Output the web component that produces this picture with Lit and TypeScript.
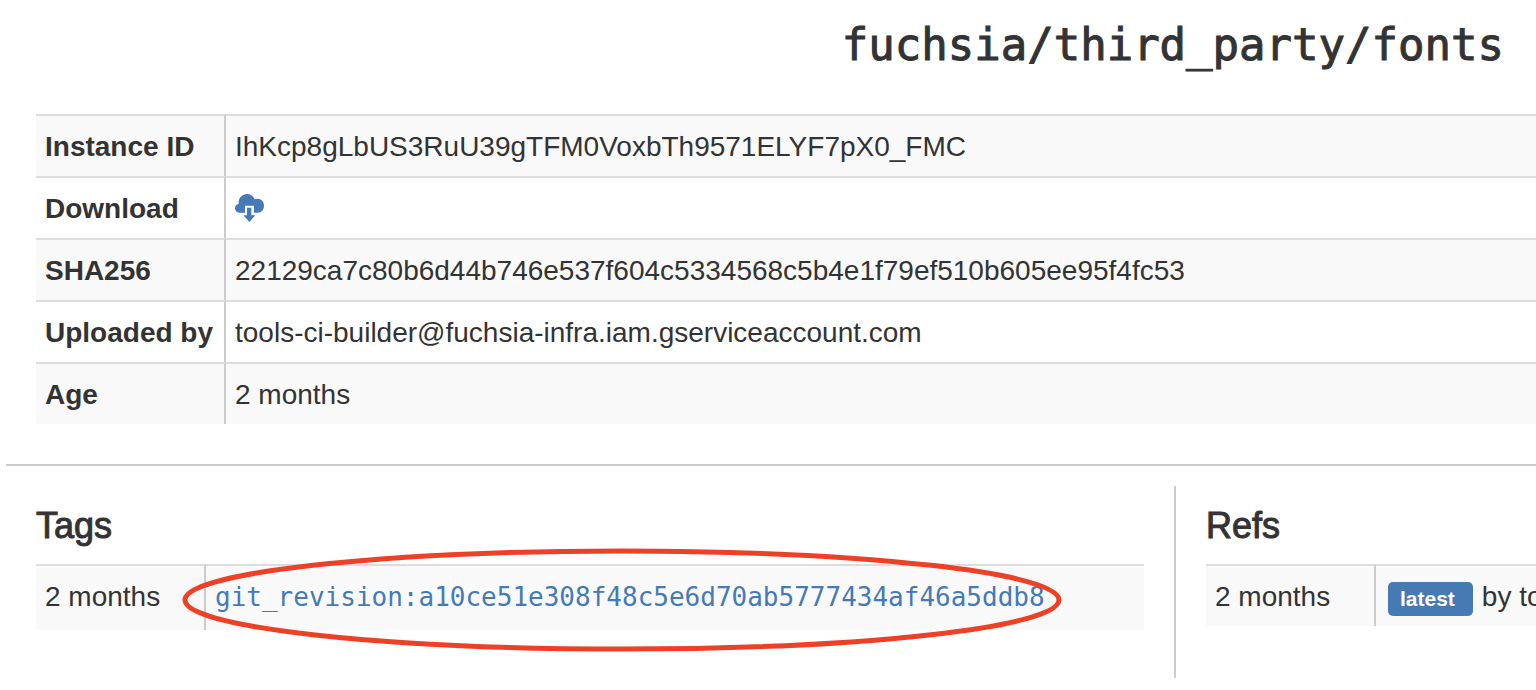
import { LitElement, html, css, svg } from "lit";
import { customElement } from "lit/decorators.js";

const cloudDownload = svg`
  <path d="M13 56C5 56 0 50 0 43C0 36 4 31 11 29C10 12 22 0 36 0C47 0 55 6 59 16C62 15 65 14 68 14C79 14 87 23 87 35C87 47 79 56 68 56H57V35H30V56Z"/>
  <path d="M36 41H49V64H61L43 84L25 64H36Z"/>`;

const account = "tools-ci-builder@fuchsia-infra.iam.gserviceaccount.com";

@customElement("app-root")
export class AppRoot extends LitElement {
  static styles = css`
    :host {
      display: block;
      overflow: hidden;
      padding-left: 6px;
      background: #fff;
      color: #333;
      font-family: "Liberation Sans", Arial, sans-serif;
      font-size: 28px;
      line-height: 40px;
    }
    * {
      box-sizing: border-box;
    }
    h1 {
      margin: 0;
      padding: 21px 32px 45px;
      font-family: "DejaVu Sans Mono", monospace;
      font-size: 44px;
      line-height: 48px;
      font-weight: 400;
      text-align: right;
      -webkit-text-stroke: 1px #333;
    }
    h2 {
      margin: 0;
      padding: 19px 0 17px;
      font-size: 36px;
      line-height: 42px;
      font-weight: 400;
      -webkit-text-stroke: 1px #333;
    }
    table {
      width: 100%;
      border-spacing: 0;
      table-layout: fixed;
    }
    th,
    td {
      height: 62px;
      padding: 11px 9px 9px;
      border-top: 2px solid #ddd;
      text-align: left;
      white-space: nowrap;
      vertical-align: top;
    }
    tr:nth-child(odd) {
      background: #f9f9f9;
    }
    .key {
      border-right: 2px solid #ccc;
      width: 190px;
    }
    .age {
      width: 170px;
    }
    a {
      color: #337ab7;
      text-decoration: none;
    }
    .info {
      padding-left: 30px;
    }
    .download {
      display: flex;
      align-items: center;
      width: 30px;
      height: 38px;
    }
    .cloud {
      display: block;
      width: 30px;
      height: 28px;
      fill: #457ab5;
    }
    hr {
      height: 2px;
      margin: 40px 0 20px;
      border: 0;
      background: #ccc;
    }
    .columns {
      display: grid;
      grid-template-columns: minmax(0, 13fr) minmax(0, 4fr);
      min-height: 192px;
    }
    .tags {
      padding: 0 30px;
      border-right: 2px solid #ccc;
    }
    .refs {
      padding-left: 30px;
    }
    .tag-cell {
      height: 66px;
    }
    .marked {
      position: relative;
      display: inline-block;
    }
    .tag {
      color: #457ab5;
      font-family: "DejaVu Sans Mono", monospace;
      font-size: 26px;
    }
    .ring {
      position: absolute;
      left: -34px;
      top: -29px;
      width: 882px;
      height: 104px;
      overflow: visible;
      pointer-events: none;
      fill: none;
      stroke: #ee4027;
      stroke-width: 5;
    }
    .ref-cell {
      padding-left: 12px;
    }
    .ref {
      display: flex;
      gap: 9px;
    }
    .badge {
      align-self: flex-start;
      margin-top: 5px;
      padding: 0 18px 0 12px;
      border-radius: 5px;
      background: #457ab5;
      color: #fff;
      font-size: 21px;
      line-height: 34px;
      font-weight: 700;
    }
  `;

  render() {
    return html`
      <h1>fuchsia/third_party/fonts</h1>
      <div class="info">
        <table>
          <tbody>
            <tr>
              <th class="key" scope="row">Instance ID</th>
              <td>IhKcp8gLbUS3RuU39gTFM0VoxbTh9571ELYF7pX0_FMC</td>
            </tr>
            <tr>
              <th class="key" scope="row">Download</th>
              <td>
                <a class="download" href="#" aria-label="Download">
                  <svg class="cloud" viewBox="0 0 90 84" aria-hidden="true">${cloudDownload}</svg>
                </a>
              </td>
            </tr>
            <tr>
              <th class="key" scope="row">SHA256</th>
              <td>22129ca7c80b6d44b746e537f604c5334568c5b4e1f79ef510b605ee95f4fc53</td>
            </tr>
            <tr>
              <th class="key" scope="row">Uploaded by</th>
              <td>${account}</td>
            </tr>
            <tr>
              <th class="key" scope="row">Age</th>
              <td>2 months</td>
            </tr>
          </tbody>
        </table>
      </div>
      <hr />
      <div class="columns">
        <section class="tags">
          <h2>Tags</h2>
          <table>
            <tbody>
              <tr>
                <td class="key age">2 months</td>
                <td class="tag-cell">
                  <span class="marked">
                    <a class="tag" href="#">git_revision:a10ce51e308f48c5e6d70ab5777434af46a5ddb8</a>
                    <svg class="ring" viewBox="0 0 882 104" aria-hidden="true">
                      <ellipse cx="441" cy="52" rx="437" ry="49" />
                    </svg>
                  </span>
                </td>
              </tr>
            </tbody>
          </table>
        </section>
        <section class="refs">
          <h2>Refs</h2>
          <table>
            <tbody>
              <tr>
                <td class="key age">2 months</td>
                <td class="ref-cell">
                  <div class="ref"><a class="badge" href="#">latest</a><span>by ${account}</span></div>
                </td>
              </tr>
            </tbody>
          </table>
        </section>
      </div>
    `;
  }
}
